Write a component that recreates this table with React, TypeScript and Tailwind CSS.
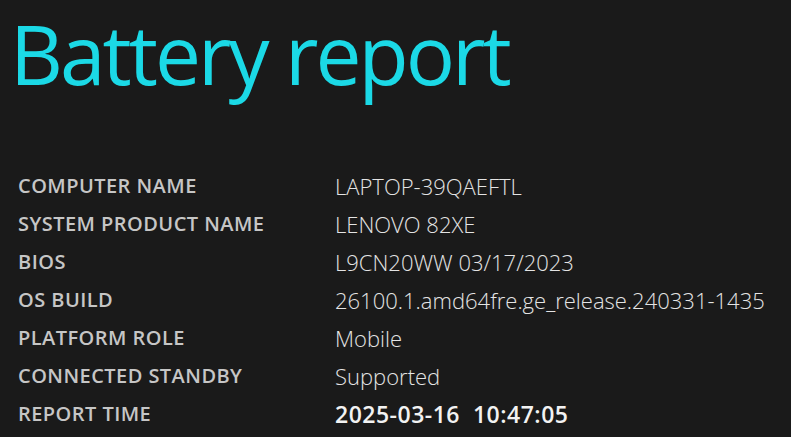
const rows: { label: string; value: string; strong?: boolean }[] = [
  { label: 'COMPUTER NAME', value: 'LAPTOP-39QAEFTL' },
  { label: 'SYSTEM PRODUCT NAME', value: 'LENOVO 82XE' },
  { label: 'BIOS', value: 'L9CN20WW 03/17/2023' },
  { label: 'OS BUILD', value: '26100.1.amd64fre.ge_release.240331-1435' },
  { label: 'PLATFORM ROLE', value: 'Mobile' },
  { label: 'CONNECTED STANDBY', value: 'Supported' },
  { label: 'REPORT TIME', value: '2025-03-16\u00a0\u00a010:47:05', strong: true },
];

export default function App() {
  return (
    <div className="w-[791px] h-[437px] overflow-hidden bg-[#1a1a1a] font-['Open_Sans',sans-serif]">
      {/* Title */}
      <h1 className="pl-[10px] text-[82px] leading-[106px] font-normal text-[#1bd9e6] tracking-[-3px]">
        Battery report
      </h1>

      {/* Info table */}
      <div className="mt-[61px] grid grid-cols-[317px_1fr] pl-[18px]">
        {rows.map((r) => (
          <div key={r.label} className="contents">
            <div className="h-[38px] flex items-center text-[20px] font-semibold text-[#c6c6c6] tracking-[0.45px]">
              {r.label}
            </div>
            <div
              className={
                'h-[38px] flex items-center ' +
                (r.strong
                  ? 'text-[23px] font-semibold text-[#f2f2f2] tracking-[0.5px]'
                  : 'text-[22px] font-light text-[#e4e4e4]')
              }
            >
              {r.value}
            </div>
          </div>
        ))}
      </div>
    </div>
  );
}
